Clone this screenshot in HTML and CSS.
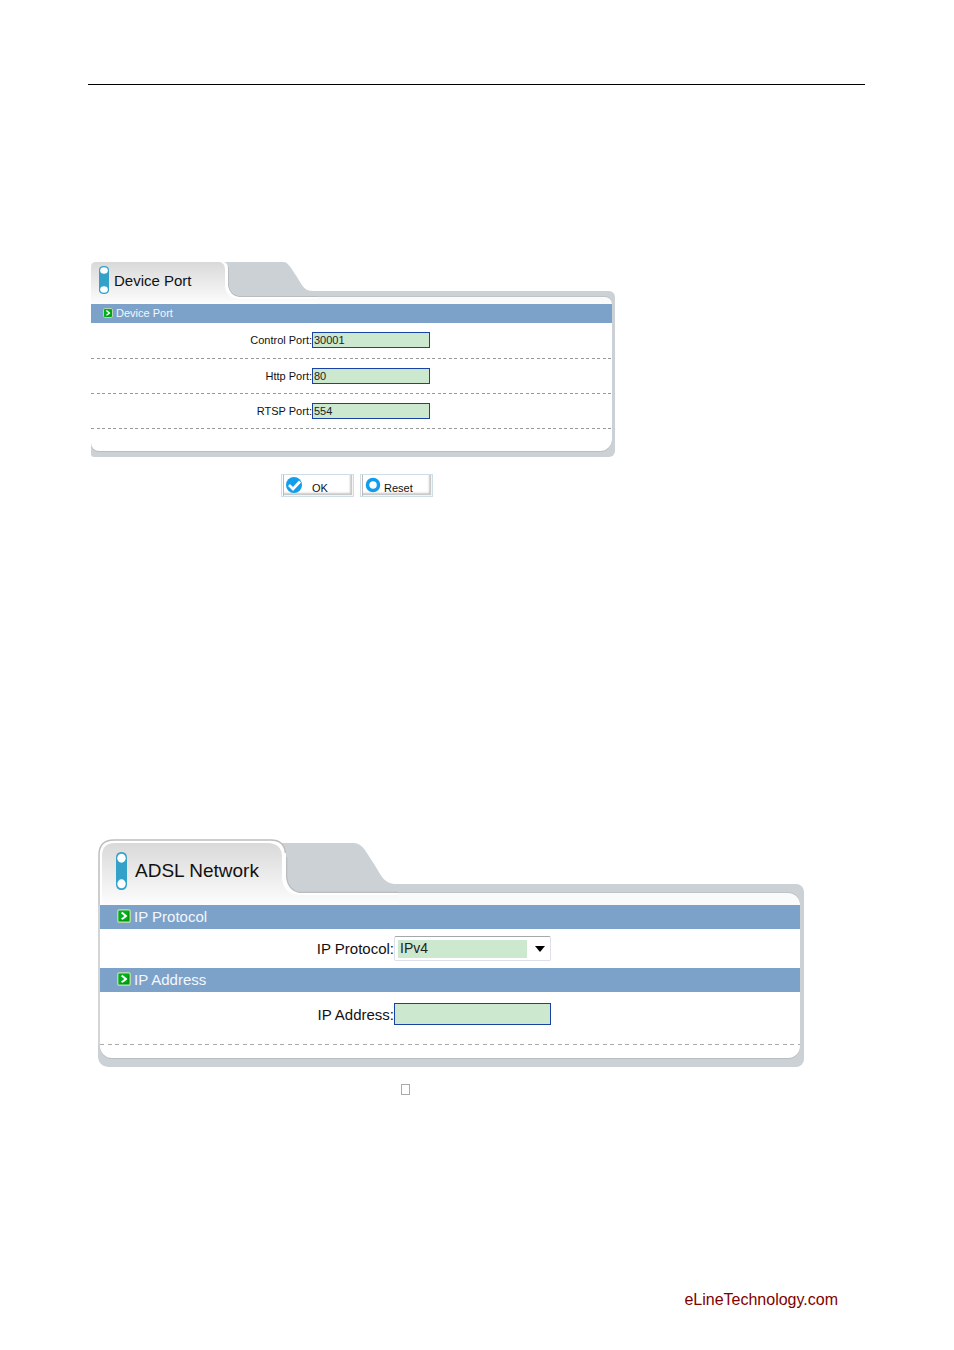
FILE: index.html
```html
<!DOCTYPE html>
<html lang="en">
<head>
<meta charset="utf-8">
<title>Device Port and ADSL Network</title>
<meta name="viewport" content="width=device-width, initial-scale=1">
<link rel="stylesheet" href="styles.css">
</head>
<body>
<svg class="defs" width="0" height="0" aria-hidden="true">
  <defs>
    <linearGradient id="tabFill" x1="0" y1="0" x2="0" y2="1">
      <stop offset="0" stop-color="#d9d9d9"/>
      <stop offset="1" stop-color="#fdfdfd"/>
    </linearGradient>
    <symbol id="slider" viewBox="0 0 11 37" preserveAspectRatio="none">
      <rect width="11" height="37" rx="5" fill="#34a1c8"/>
      <ellipse cx="5.5" cy="6" rx="4.2" ry="4.4" fill="#fff"/>
      <ellipse cx="5.5" cy="31" rx="4.2" ry="4.4" fill="#fff"/>
    </symbol>
    <symbol id="arrow" viewBox="0 0 12 12">
      <rect x=".6" y=".6" width="10.8" height="10.8" rx="1.6" fill="#00b21a" stroke="#b7d3b0" stroke-width="1.2"/>
      <path d="M4 3 L7.6 6 L4 9" fill="none" stroke="#fff" stroke-width="1.8"/>
      <path d="M3 9.6 H9.6 V3" fill="none" stroke="#00860f" stroke-width=".8"/>
    </symbol>
  </defs>
</svg>
<main class="page">
  <hr class="rule">

  <form class="port-form">
    <section class="panel small">
      <header class="head">
        <div class="tab">
          <svg class="tab-shape" width="226" height="42" viewBox="0 0 226 42" aria-hidden="true">
            <path d="M132 0 H192 C198 0 201 8 206 15 C211 23 213 29 222 29 H226 V35 H132 Z" fill="#ccd1d5"/>
            <path d="M137.500 5 V24 Q139 33 148 34.500 H226" fill="none" stroke="#b9bdc0"/>
            <path d="M0 42 V4 Q0 0 4 0 H133 Q137 1 137 7 V24 Q139 34 148 35 H226 V42 Z" fill="#fff"/>
            <path d="M0 42 V5 Q0 0 5 0 H129 Q134 1 134 8 V25 Q136 36 148 37 H226 V42 Z" fill="url(#tabFill)"/>
          </svg>
          <h2 class="title"><svg class="title-icon" aria-hidden="true"><use href="#slider"/></svg>Device Port</h2>
        </div>
        <div class="shoulder"><div class="shoulder-in"></div></div>
      </header>
      <div class="body">
        <h3 class="bar"><svg class="bar-icon" aria-hidden="true"><use href="#arrow"/></svg>Device Port</h3>
        <div class="row first"><label for="control">Control Port:</label><input class="field" id="control" type="text" value="30001"></div>
        <div class="row"><label for="http">Http Port:</label><input class="field" id="http" type="text" value="80"></div>
        <div class="row"><label for="rtsp">RTSP Port:</label><input class="field" id="rtsp" type="text" value="554"></div>
      </div>
      <div class="foot"><div class="foot-in"></div></div>
    </section>
    <div class="actions">
      <button class="btn ok" type="button"><svg width="18" height="18" viewBox="0 0 18 18" aria-hidden="true"><circle cx="9" cy="9" r="8" fill="#119eec"/><path d="M4 9 L8 13 L15 5.500" fill="none" stroke="#fff" stroke-width="2.800"/></svg><span>OK</span></button>
      <button class="btn" type="button"><svg width="18" height="18" viewBox="0 0 18 18" aria-hidden="true"><circle cx="9" cy="9" r="5.500" fill="#fff" stroke="#109dee" stroke-width="3.500"/></svg><span>Reset</span></button>
    </div>
  </form>

  <form class="adsl-form">
    <section class="panel large">
      <header class="head">
        <div class="tab">
          <svg class="tab-shape" width="300" height="66" viewBox="0 0 300 66" aria-hidden="true">
            <path d="M174 4 H256 C265 4 269 15 276 25 C283 36 286 45 298 45 H300 V54 H180 V10 Z" fill="#ccd1d5"/>
            <path d="M188.500 18 V38 Q190 51 201 53.500 H300" fill="none" stroke="#b9bdc0" stroke-width="1.500"/>
            <path d="M1 66 V16 Q1 1 16 1 H173 Q188 1 188 17 V38 Q189 51 201 54 H300 V66 Z" fill="#fff"/>
            <path d="M1 66 V16 Q1 1 16 1 H173 Q186 1 187.500 14" fill="none" stroke="#bdbdbd" stroke-width="1.500"/>
            <path d="M4 66 V17 Q4 4 17 4 H171 Q183 5 184 16 V40 Q186 55 201 56 H300 V66 Z" fill="url(#tabFill)"/>
          </svg>
          <h2 class="title"><svg class="title-icon" aria-hidden="true"><use href="#slider"/></svg>ADSL Network</h2>
        </div>
        <div class="shoulder"><div class="shoulder-in"></div></div>
      </header>
      <div class="body">
        <h3 class="bar"><svg class="bar-icon" aria-hidden="true"><use href="#arrow"/></svg>IP Protocol</h3>
        <div class="row plain"><label for="protocol">IP Protocol:</label>
          <div class="picker">
            <select id="protocol"><option>IPv4</option></select>
            <svg width="10" height="6" viewBox="0 0 10 6" aria-hidden="true"><path d="M0 0 H10 L5 6 Z" fill="#000"/></svg>
          </div>
        </div>
        <h3 class="bar"><svg class="bar-icon" aria-hidden="true"><use href="#arrow"/></svg>IP Address</h3>
        <div class="row last"><label for="address">IP Address:</label><input class="field" id="address" type="text"></div>
      </div>
      <div class="foot"><div class="foot-in"></div></div>
    </section>
    <div class="glyph"></div>
  </form>

  <footer class="site">eLineTechnology.com</footer>
</main>
</body>
</html>
```
FILE: styles.css
```css
* { box-sizing: border-box; }
body { margin: 0; background: #fff; color: #111; font-family: "Liberation Sans", Arial, sans-serif; }
.defs { display: block; }
.page { padding: 84px 89px 40px 88px; }
.rule { height: 1px; margin: 0; border: 0; background: #000; }
h2, h3 { margin: 0; font-weight: normal; }

.port-form { margin: 177px 0 0 3px; }
.adsl-form { margin: 342px 0 0 10px; }

.panel { width: 100%; }
.small { max-width: 524px; font-size: 11px; }
.large { max-width: 706px; font-size: 15px; }

.head { display: flex; }
.tab { display: grid; flex: none; }
.tab > * { grid-area: 1 / 1; }
.tab-shape { display: block; }
.title { display: flex; align-items: center; align-self: start; }
.small .title { height: 36px; padding-left: 8px; gap: 5px; font-size: 15px; }
.large .title { height: 64px; padding-left: 18px; gap: 8px; font-size: 19px; }
.small .title-icon { width: 10px; height: 28px; }
.large .title-icon { width: 11px; height: 38px; }

.shoulder { flex: 1; background: #ccd1d5; }
.small .shoulder { margin-top: 29px; padding: 6px 3px 0 0; border-top-right-radius: 6px; }
.large .shoulder { margin-top: 45px; padding: 9px 4px 0 0; border-top-right-radius: 8px; }
.shoulder-in { height: 100%; background: #fafafa; border-top-right-radius: 12px; box-shadow: 0 -1px #bfc3c6; }

.body { border-right: 3px solid #ccd1d5; background: #fff; }
.large .body { border-right-width: 4px; border-left: 2px solid #d2d4d6; }

.bar { display: flex; align-items: center; background: #7da2ca; color: #f2f7fc; font-size: inherit; }
.small .bar { height: 19px; padding: 0 0 1px 12px; gap: 3px; }
.large .bar { height: 24px; padding: 0 0 2px 17px; gap: 3px; }
.small .bar-icon { width: 10px; height: 10px; }
.large .bar-icon { width: 14px; height: 14px; }

.row { display: grid; align-items: center; }
.row label { text-align: right; }
.small .row {
  grid-template-columns: 221px 118px;
  height: 35px;
  padding-bottom: 1px;
  background: repeating-linear-gradient(90deg, #999 0 3px, transparent 3px 6px, #999 6px 9px, transparent 9px 11px) bottom / 100% 1px no-repeat;
}
.small .first { height: 36px; padding-bottom: 2px; }
.large .row { grid-template-columns: 294px 157px; }
.large .plain { height: 39px; }
.large .last {
  height: 53px;
  padding-bottom: 9px;
  background: repeating-linear-gradient(90deg, #aaa 0 4px, transparent 4px 8px, #aaa 8px 12px, transparent 12px 15px) bottom / 100% 1px no-repeat;
}

.field { width: 100%; height: 16px; margin: 0; padding: 0 1px; border: 1px solid #1a41a6; border-radius: 0; background: #cce8cf; color: #222; font: inherit; }
.large .field { height: 22px; }

.picker { display: grid; align-items: center; }
.picker > * { grid-area: 1 / 1; }
.picker svg { justify-self: end; margin-right: 6px; pointer-events: none; }
.picker select {
  appearance: none;
  width: 100%;
  height: 25px;
  margin: 0;
  padding: 0 24px 2px 5px;
  border: 1px solid #dde0ea;
  border-top-color: #a5a8ad;
  border-radius: 2px;
  background: linear-gradient(#cce8cf, #cce8cf) 3px 3px / 129px 18px no-repeat #fff;
  color: #222;
  font-family: inherit;
  font-size: 14px;
}

.foot { background: #ccd1d5; }
.small .foot { padding: 0 3px 6px 0; border-radius: 0 0 6px 3px; }
.large .foot { padding: 0 4px 9px 2px; border-radius: 0 0 8px 10px; }
.foot-in { height: 22px; background: #fff; border-radius: 0 0 12px 12px; box-shadow: 0 1px #b9bdc0; }
.small .foot-in { border-bottom-left-radius: 8px; }
.large .foot-in { height: 13px; }

.actions { display: flex; gap: 6px; padding: 17px 0 0 190px; }
.btn {
  display: flex;
  align-items: center;
  width: 73px;
  height: 23px;
  padding: 0 3px;
  gap: 2px;
  border: 1px solid #cfdde5;
  border-radius: 0;
  background: #fff;
  box-shadow: inset 1px 0 #fff, inset 2px 0 #bbb, inset -1px -1px #f4f4f4, inset -3px -3px 2px #c8c8c8;
  color: #111;
  font: 11px "Liberation Sans", Arial, sans-serif;
}
.btn span { padding-top: 4px; }
.btn svg { margin-bottom: 2px; }
.ok { gap: 9px; }

.glyph { width: 9px; height: 11px; margin: 17px 0 0 303px; border: 1px solid #aaa; }
.site { margin-top: 196px; padding-right: 27px; color: #800000; font-size: 16px; line-height: 18px; text-align: right; }
```
